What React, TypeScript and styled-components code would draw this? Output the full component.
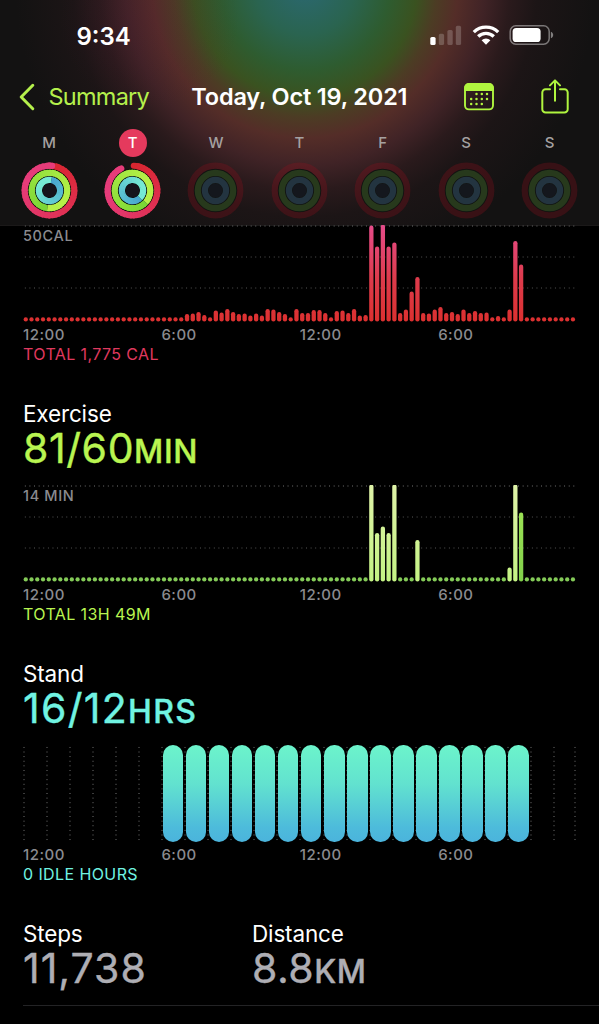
import styled, { createGlobalStyle, css } from "styled-components";

const GlobalStyle = createGlobalStyle`
  * {
    box-sizing: border-box;
  }

  body {
    margin: 0;
    background: #000;
    font-family: Inter, "Liberation Sans", sans-serif;
  }
`;

/* ---------- data ---------- */

const REST = 4.3;
const rest = (count: number) => Array<number>(count).fill(REST);

const moveBars = [
  ...rest(28),
  7.5, 8, 9.5, 6.5, 4.3, 11, 9, 12.5, 9.5, 7.5, 8, 6, 8, 6, 12.5, 12, 9.5, 7.5,
  4.3, 12.5, 8.5, 8.5, 11.5, 11.5, 8.5, 4.3, 10.5, 11, 8.5, 12.5, 6, 6.5, 96,
  75, 97, 75, 79, 8.5, 12, 30, 44.5, 8.5, 8, 12, 14.5, 8.5, 9.5, 7.5, 12, 8.5,
  10.5, 8.5, 9, 4.3, 5.5, 4.3, 12, 80.5, 57,
  ...rest(9),
];

const exerciseBars = [
  ...rest(60),
  97, 48.5, 55, 48.5, 97,
  ...rest(3),
  41.5,
  ...rest(15),
  14, 97, 69,
  ...rest(9),
];

const hours = Array.from({ length: 24 }, (_, i) => i >= 6 && i < 22);
const axis = ["12:00", "6:00", "12:00", "6:00"];

interface Day {
  letter: string;
  active?: boolean;
  rings?: [number, number][];
}

// each ring is [start, end] in degrees, clockwise from the top
const days: Day[] = [
  { letter: "M", rings: [[6, 366], [187, 547], [10, 370]] },
  { letter: "T", active: true, rings: [[3, 333], [132, 492], [135, 495]] },
  { letter: "W" },
  { letter: "T" },
  { letter: "F" },
  { letter: "S" },
  { letter: "S" },
];

type Rgb = [number, number, number];

const ringStyles: { r: number; from: Rgb; to: Rgb; dim: string }[] = [
  { r: 24.8, from: [216, 38, 48], to: [230, 60, 122], dim: "rgba(150, 16, 30, 0.28)" },
  { r: 17.7, from: [122, 214, 54], to: [182, 240, 72], dim: "#27391c" },
  { r: 10.6, from: [72, 166, 208], to: [118, 234, 212], dim: "#233440" },
];

/* ---------- icons ---------- */

const point = (r: number, deg: number) => {
  const a = ((deg - 90) * Math.PI) / 180;
  return `${(28.5 + r * Math.cos(a)).toFixed(2)} ${(28.5 + r * Math.sin(a)).toFixed(2)}`;
};

const mix = (from: Rgb, to: Rgb, t: number) =>
  `rgb(${from.map((c, i) => Math.round(c + (to[i] - c) * t)).join(",")})`;

const STEPS = 48;

const Rings = ({ rings }: { rings?: [number, number][] }) => (
  <svg width="57" height="57" viewBox="0 0 57 57" fill="none">
    <circle cx="28.5" cy="28.5" r="21.8" fill={rings ? "#0b0c0c" : "#121412"} />
    <circle cx="28.5" cy="28.5" r="7" fill={rings ? "#15141b" : "#14171d"} />
    {ringStyles.map(({ r, from, to, dim }, n) => {
      if (!rings) {
        return <circle key={n} cx="28.5" cy="28.5" r={r} stroke={dim} strokeWidth="6.2" />;
      }
      const [start, end] = rings[n];
      const step = (end - start) / STEPS;
      return (
        <g key={n} strokeWidth="6.2">
          {Array.from({ length: STEPS }, (_, i) => (
            <path
              key={i}
              d={`M${point(r, start + i * step)}A${r} ${r} 0 0 1 ${point(r, start + (i + 1) * step + (i < STEPS - 1 ? 4 : 0))}`}
              stroke={mix(from, to, Math.min(1, (i / STEPS) * 1.3))}
              strokeLinecap={n === 0 && (i === 0 || i === STEPS - 1) ? "round" : "butt"}
            />
          ))}
        </g>
      );
    })}
  </svg>
);

const ChevronIcon = () => (
  <svg width="18" height="28" viewBox="0 0 18 28" fill="none">
    <path d="M14.8 2.3 3.2 14l11.6 11.7" stroke="#b5f04c" strokeWidth="3" strokeLinecap="round" strokeLinejoin="round" />
  </svg>
);

const CalendarIcon = () => (
  <svg width="30" height="28" viewBox="0 0 30 28" fill="none">
    <rect x="1" y="1" width="28" height="25.4" rx="3.8" stroke="#b0f53f" strokeWidth="1.9" />
    <path d="M0.3 8V4.8A4.5 4.5 0 0 1 4.8.2h20.4a4.5 4.5 0 0 1 4.5 4.6V8Z" fill="#b0f53f" />
    {[11, 16, 21].map((y, row) =>
      [7.2, 12.5, 17.8, 23].map((x, col) =>
        (row === 0 && col === 0) || (row === 2 && col === 3) ? null : (
          <circle key={`${row}-${col}`} cx={x} cy={y} r="1.25" fill="#b0f53f" />
        )
      )
    )}
  </svg>
);

const ShareIcon = () => (
  <svg width="28" height="35" viewBox="0 0 28 35" fill="none" stroke="#b0f53f" strokeWidth="2" strokeLinecap="round" strokeLinejoin="round">
    <path d="M9 10.2H4.6A3.3 3.3 0 0 0 1.3 13.5v16.7a3.3 3.3 0 0 0 3.3 3.3h18.8a3.3 3.3 0 0 0 3.3-3.3V13.5a3.3 3.3 0 0 0-3.3-3.3H19" />
    <path d="M14 21.8V1.6M9 6.4l5-5 5 5" />
  </svg>
);

const SignalIcon = () => (
  <svg width="32" height="20" viewBox="0 0 32 20" fill="#fff">
    <rect x="0.3" y="12" width="5.3" height="8" rx="1.6" />
    <g opacity="0.2">
      <rect x="8.8" y="8.8" width="5.3" height="11.2" rx="1.6" />
      <rect x="17.4" y="5" width="5.3" height="15" rx="1.6" />
      <rect x="25.8" y="0.8" width="5.3" height="19.2" rx="1.6" />
    </g>
  </svg>
);

const WifiIcon = () => (
  <svg width="28" height="20" viewBox="0 0 28 20" fill="none" stroke="#fff" strokeWidth="3.3">
    <path d="M1.8 7.1a17.5 17.5 0 0 1 24.4 0" />
    <path d="M6.2 11.5a11.2 11.2 0 0 1 15.6 0" />
    <path d="M14 19.7 9.6 15.3a6.4 6.4 0 0 1 8.8 0Z" fill="#fff" stroke="none" />
  </svg>
);

const BatteryIcon = () => (
  <svg width="45" height="20" viewBox="0 0 45 20" fill="none">
    <rect x="1.2" y="0.8" width="39" height="18.4" rx="5.6" stroke="#fff" strokeOpacity="0.42" strokeWidth="1.5" />
    <rect x="3.6" y="3" width="28" height="14" rx="3.6" fill="#fff" />
    <path d="M41.9 6.7c1.4.6 2.3 1.9 2.3 3.3s-.9 2.7-2.3 3.3Z" fill="#fff" fillOpacity="0.45" />
  </svg>
);

/* ---------- charts ---------- */

const PITCH = 5.76;

interface BarsProps {
  bars: number[];
  tone: "move" | "exercise";
}

const Bars = ({ bars, tone }: BarsProps) => {
  const fill = (height: number, i: number) => {
    if (tone === "move") return "url(#move)";
    if (height === REST) return "#84cb58";
    return i === 86 ? "url(#late)" : "url(#exercise)";
  };

  return (
    <svg width="553" height="97" viewBox="0 0 553 97">
      <defs>
        <linearGradient id="move" gradientUnits="userSpaceOnUse" x1="0" y1="97" x2="0" y2="0">
          <stop offset="0" stopColor="#dc302f" />
          <stop offset="0.45" stopColor="#dd3b4c" />
          <stop offset="1" stopColor="#e64c8a" />
        </linearGradient>
        <linearGradient id="exercise" gradientUnits="userSpaceOnUse" x1="0" y1="97" x2="0" y2="0">
          <stop offset="0" stopColor="#c4f384" />
          <stop offset="1" stopColor="#dff3a8" />
        </linearGradient>
        <linearGradient id="late" gradientUnits="userSpaceOnUse" x1="0" y1="97" x2="0" y2="28">
          <stop offset="0" stopColor="#80d04a" />
          <stop offset="1" stopColor="#9be254" />
        </linearGradient>
      </defs>
      {bars.map((height, i) => (
        <rect
          key={i}
          x={2.75 + i * PITCH - REST / 2}
          y={96.6 - height}
          width={REST}
          height={height}
          rx={REST / 2}
          fill={fill(height, i)}
        />
      ))}
    </svg>
  );
};

const Axis = () => (
  <AxisRow>
    {axis.map((label, i) => (
      <span key={i}>{label}</span>
    ))}
  </AxisRow>
);

interface TimeChartProps extends BarsProps {
  scale: string;
  total: string;
}

const TimeChart = ({ bars, tone, scale, total }: TimeChartProps) => (
  <>
    <Plot>
      <ScaleLabel>{scale}</ScaleLabel>
      <Bars bars={bars} tone={tone} />
    </Plot>
    <Axis />
    <Total $tone={tone}>{total}</Total>
  </>
);

/* ---------- page ---------- */

const App = () => {
  return (
    <Screen>
      <GlobalStyle />
      <Header>
        <StatusBar>
          <Clock>9:34</Clock>
          <StatusIcons>
            <SignalIcon />
            <WifiIcon />
            <BatteryIcon />
          </StatusIcons>
        </StatusBar>
        <NavBar>
          <BackButton>
            <ChevronIcon />
            <span>Summary</span>
          </BackButton>
          <NavTitle>Today, Oct 19, 2021</NavTitle>
          <NavActions>
            <CalendarIcon />
            <ShareIcon />
          </NavActions>
        </NavBar>
        <Week>
          {days.map((day, i) => (
            <DayCell key={i}>
              <DayLetter $active={day.active}>{day.letter}</DayLetter>
              <Rings rings={day.rings} />
            </DayCell>
          ))}
        </Week>
      </Header>

      <Content>
        <TimeChart bars={moveBars} tone="move" scale="50CAL" total="TOTAL 1,775 CAL" />

        <Heading>Exercise</Heading>
        <Value $tone="exercise" $spacing="0.6px">
          81/60<Unit>MIN</Unit>
        </Value>
        <ChartGap />
        <TimeChart bars={exerciseBars} tone="exercise" scale="14 MIN" total="TOTAL 13H 49M" />

        <Heading>Stand</Heading>
        <Value $tone="stand" $spacing="1.3px">
          16/12<Unit>HRS</Unit>
        </Value>
        <ChartGap />
        <HourPlot>
          {hours.map((stood, i) => (
            <Hour key={i}>{stood ? <Capsule /> : null}</Hour>
          ))}
        </HourPlot>
        <Axis />
        <Total $tone="stand">0 IDLE HOURS</Total>

        <Stats>
          <div>
            <Heading>Steps</Heading>
            <Value $tone="plain" $spacing="1px">
              11,738
            </Value>
          </div>
          <div>
            <Heading>Distance</Heading>
            <Value $tone="plain" $spacing="0.5px">
              8.8<Unit>KM</Unit>
            </Value>
          </div>
        </Stats>
      </Content>
    </Screen>
  );
};

export default App;

/* ---------- styles ---------- */

const tones = {
  move: "#e0395f",
  exercise: "#b9f551",
  stand: "#70f3e2",
  plain: "#aeaeb4",
};

type Tone = keyof typeof tones;

const Screen = styled.div`
  width: 599px;
  height: 1024px;
  overflow: hidden;
  background: #000;
`;

const Header = styled.header`
  height: 226px;
  border-bottom: 1px solid #1b1919;
  background:
    radial-gradient(circle 90px at 150px 20px, rgba(90, 20, 60, 0.16), transparent),
    radial-gradient(
      circle 320px at 305px -15px,
      #2b6872 0,
      #2a6450 50px,
      #2e5c30 85px,
      #3a5220 112px,
      #4c3c24 132px,
      #542d28 153px,
      #402326 180px,
      #2a1a1c 205px,
      #1c1516 232px,
      #131212 290px
    );
`;

const StatusBar = styled.div`
  display: flex;
  align-items: center;
  justify-content: space-between;
  height: 72px;
  padding: 1px 45px 0 76.5px;
`;

const Clock = styled.span`
  color: #fff;
  font-size: 24px;
  font-weight: 600;
  line-height: 30px;
`;

const StatusIcons = styled.div`
  display: flex;
  align-items: center;
  gap: 9.5px;
  margin-top: -3px;
`;

const NavBar = styled.div`
  display: grid;
  grid-template-columns: 191.3px 1fr auto;
  align-items: center;
  height: 50px;
  padding-right: 30px;
  font-size: 23.5px;
`;

const BackButton = styled.div`
  display: flex;
  align-items: center;
  gap: 13px;
  margin-top: -1px;
  padding-left: 17.5px;
  color: #b5f04c;
  letter-spacing: -0.75px;
`;

const NavTitle = styled.h1`
  margin: -1px 0 0;
  color: #fff;
  font-size: 23.5px;
  font-weight: 600;
  letter-spacing: -0.18px;
  white-space: nowrap;
`;

const NavActions = styled.div`
  display: flex;
  align-items: center;
  gap: 47px;
  margin-top: -1px;
`;

const Week = styled.div`
  display: grid;
  grid-template-columns: repeat(7, 83.4px);
  padding: 6.5px 0 0 7.5px;
`;

const DayCell = styled.div`
  display: flex;
  flex-direction: column;
  align-items: center;
  gap: 5px;

  svg {
    display: block;
  }
`;

const DayLetter = styled.span<{ $active?: boolean }>`
  width: 28px;
  height: 28px;
  border-radius: 50%;
  color: #a5a1a1;
  font-size: 15px;
  font-weight: 500;
  line-height: 28px;
  text-align: center;

  ${(p) =>
    p.$active &&
    css`
      background: #e53a5d;
      color: #fff;
    `}
`;

const Content = styled.main`
  margin-top: -1px;
  padding-left: 23px;
`;

const Plot = styled.div`
  display: grid;
  width: 553px;
  height: 97px;
  background-image: radial-gradient(circle, #4c4c4c 0.4px, transparent 0.9px),
    radial-gradient(circle, #383838 0.4px, transparent 0.9px),
    radial-gradient(circle, #383838 0.4px, transparent 0.9px);
  background-size: 4.61px 2px;
  background-repeat: repeat-x;
  background-position: 0 0, 0 31px, 0 62px;

  > * {
    grid-area: 1 / 1;
  }
`;

const ScaleLabel = styled.span`
  color: #8b8b8f;
  font-size: 14.5px;
  font-weight: 500;
  line-height: 21px;
  letter-spacing: 0.65px;
`;

const AxisRow = styled.div`
  display: grid;
  grid-template-columns: repeat(4, 138.4px);
  padding-top: 2px;
  color: #8b8b8f;
  font-size: 15px;
  font-weight: 500;
  line-height: 21px;
  letter-spacing: 0.5px;
`;

const Total = styled.div<{ $tone: Tone }>`
  color: ${(p) => tones[p.$tone]};
  font-size: 16px;
  line-height: 18px;
  letter-spacing: 0.4px;
`;

const Heading = styled.h2`
  margin: 37px 0 0;
  color: #fff;
  font-size: 22.5px;
  font-weight: 400;
  line-height: 28px;
  letter-spacing: -0.15px;
`;

const Value = styled.div<{ $tone: Tone; $spacing: string }>`
  height: 40px;
  color: ${(p) => tones[p.$tone]};
  font-size: 41px;
  font-weight: 400;
  line-height: 40px;
  letter-spacing: ${(p) => p.$spacing};
  -webkit-text-stroke: 0.4px currentColor;
`;

const Unit = styled.span`
  font-size: 32px;
  font-weight: 500;
`;

const ChartGap = styled.div`
  height: 17px;
`;

const hourLine = "radial-gradient(circle, #4c4c4c 0.4px, transparent 0.9px)";

const HourPlot = styled.div`
  display: grid;
  grid-template-columns: repeat(24, 1fr);
  width: 553px;
  height: 97px;
  background: ${hourLine} right / 2px 4.61px repeat-y;
`;

const Hour = styled.div`
  display: grid;
  padding-left: 1.6px;
  background: ${hourLine} left / 2px 4.61px repeat-y;
`;

const Capsule = styled.span`
  width: 20.4px;
  border-radius: 10.2px;
  background: linear-gradient(#6cf4cb, #62e2cf 40%, #4dbbdb 85%, #4bb4dc);
`;

const Stats = styled.div`
  display: grid;
  grid-template-columns: 229px 1fr;
  padding-bottom: 17px;
  border-bottom: 1px solid #232325;
`;
